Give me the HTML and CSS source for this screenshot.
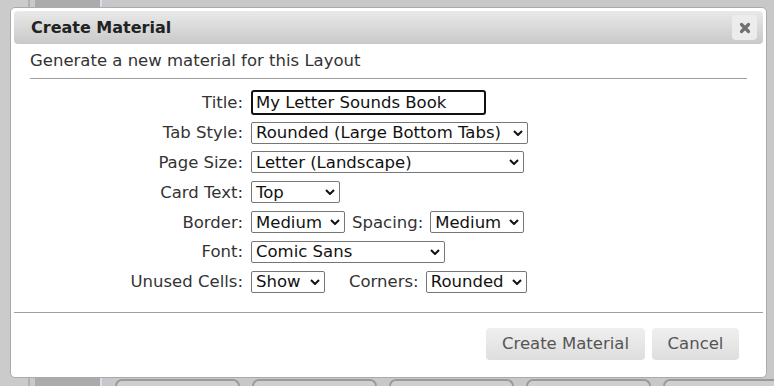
FILE: index.html
```html
<!DOCTYPE html>
<html lang="en">
<head>
  <meta charset="UTF-8" />
  <title>Create Material</title>
  <link rel="stylesheet" href="styles.css">
</head>
<body>
  <!-- page behind the modal -->
  <div class="page">
    <div class="side-strip"></div>
    <div class="side-dark"></div>
    <div class="side-gap"></div>
    <div class="page-main">
      <div class="tab-row">
        <div class="bg-tab"></div>
        <div class="bg-tab"></div>
        <div class="bg-tab"></div>
        <div class="bg-tab"></div>
        <div class="bg-tab"></div>
      </div>
    </div>
  </div>

  <!-- dialog -->
  <div class="dialog">
    <div class="dialog-title">
      <span>Create Material</span>
      <button class="close-btn" aria-label="close">
        <svg width="12" height="12" viewBox="0 0 12 12">
          <path d="M2.5 2.5 L9.5 9.5 M9.5 2.5 L2.5 9.5" stroke="#707070" stroke-width="3.2" stroke-linecap="round"/>
        </svg>
      </button>
    </div>

    <div class="dialog-body">
      <div class="intro">Generate a new material for this Layout</div>
      <div class="rule"></div>

      <div class="form">
        <div class="row">
          <label class="lbl">Title:</label>
          <div class="text-input">My Letter Sounds Book</div>
        </div>
        <div class="row">
          <label class="lbl">Tab Style:</label>
          <div class="sel w-tab"><span>Rounded (Large Bottom Tabs)</span><svg class="chev" viewBox="0 0 10 6"><path d="M1 1 L5 5 L9 1" /></svg></div>
        </div>
        <div class="row">
          <label class="lbl">Page Size:</label>
          <div class="sel w-page"><span>Letter (Landscape)</span><svg class="chev" viewBox="0 0 10 6"><path d="M1 1 L5 5 L9 1" /></svg></div>
        </div>
        <div class="row">
          <label class="lbl">Card Text:</label>
          <div class="sel w-card"><span>Top</span><svg class="chev" viewBox="0 0 10 6"><path d="M1 1 L5 5 L9 1" /></svg></div>
        </div>
        <div class="row">
          <label class="lbl">Border:</label>
          <div class="sel w-med"><span>Medium</span><svg class="chev" viewBox="0 0 10 6"><path d="M1 1 L5 5 L9 1" /></svg></div>
          <label class="lbl-inline">Spacing:</label>
          <div class="sel w-med"><span>Medium</span><svg class="chev" viewBox="0 0 10 6"><path d="M1 1 L5 5 L9 1" /></svg></div>
        </div>
        <div class="row">
          <label class="lbl">Font:</label>
          <div class="sel w-font"><span>Comic Sans</span><svg class="chev" viewBox="0 0 10 6"><path d="M1 1 L5 5 L9 1" /></svg></div>
        </div>
        <div class="row">
          <label class="lbl">Unused Cells:</label>
          <div class="sel w-show"><span>Show</span><svg class="chev" viewBox="0 0 10 6"><path d="M1 1 L5 5 L9 1" /></svg></div>
          <label class="lbl-inline corners">Corners:</label>
          <div class="sel w-round"><span>Rounded</span><svg class="chev" viewBox="0 0 10 6"><path d="M1 1 L5 5 L9 1" /></svg></div>
        </div>
      </div>
    </div>

    <div class="dialog-foot">
      <button class="btn btn-create">Create Material</button>
      <button class="btn btn-cancel">Cancel</button>
    </div>
  </div>
</body>
</html>
```

FILE: styles.css
```css
html, body {
  margin: 0;
  height: 100%;
}
body {
  background: #c9c9c9;
  font-family: 'DejaVu Sans', Verdana, sans-serif;
  color: #333;
  overflow: hidden;
  position: relative;
}

/* background page */
.page {
  display: flex;
  height: 386px;
}
.side-strip {
  flex: none;
  width: 28px;
  border-right: 2px solid #b0b0b0;
  background: #cbcbcb;
  margin-right: 5px;
}
.side-dark {
  flex: none;
  width: 65px;
  background: #ababab;
}
.side-gap {
  flex: none;
  width: 8px;
  background: #c6c6cc;
  border-left: 2px solid #dcdcdc;
}
.page-main {
  flex: 1;
  min-width: 0;
  display: flex;
  flex-direction: column;
  justify-content: flex-end;
  background: #c8c8c8;
  overflow: hidden;
}
.tab-row {
  display: flex;
  gap: 12px;
  padding-left: 5px;
  height: 7px;
}
.bg-tab {
  flex: none;
  width: 121px;
  border: 2px solid #9a9a9a;
  border-bottom: none;
  border-radius: 10px 10px 0 0;
  background: #cfcfcf;
}

/* dialog */
.dialog {
  position: absolute;
  left: 10px;
  top: 7px;
  width: 757px;
  height: 371px;
  background: #fff;
  border: 1px solid #aaa;
  border-radius: 5px;
  padding: 3px;
  box-sizing: border-box;
  display: flex;
  flex-direction: column;
}
.dialog-title {
  height: 33px;
  flex: none;
  border-radius: 4px;
  background: linear-gradient(#e9e9e9, #c9c9c9);
  display: flex;
  align-items: center;
  justify-content: space-between;
  padding: 0 6px 0 17px;
  font-weight: bold;
  font-size: 16px;
  color: #222;
}
.close-btn {
  width: 25px;
  height: 25px;
  border: none;
  border-radius: 4px;
  background: #ececec;
  display: flex;
  align-items: center;
  justify-content: center;
  padding: 0;
}

.dialog-body {
  padding: 0 16px;
  flex: 1;
}
.intro {
  font-size: 16.5px;
  margin-top: 6px;
  line-height: 22px;
}
.rule {
  height: 1px;
  background: #a0a0a0;
  margin-top: 6px;
}

.form {
  margin-top: 9px;
}
.row {
  display: flex;
  align-items: center;
  height: 29.8px;
  font-size: 16.5px;
}
.lbl {
  width: 213px;
  text-align: right;
  margin-right: 8px;
}
.lbl-inline {
  margin: 0 7px;
}
.lbl-inline.corners {
  margin-left: 24px;
}
.text-input {
  width: 228px;
  height: 21px;
  border: 2px solid #111;
  border-radius: 3px;
  padding-left: 3px;
  line-height: 21px;
  color: #111;
}
.sel {
  height: 20px;
  border: 1px solid #767676;
  border-radius: 2px;
  display: flex;
  align-items: center;
  justify-content: space-between;
  padding: 0 4px;
  color: #111;
}
.chev {
  width: 10px;
  height: 6px;
  flex: none;
  fill: none;
  stroke: #111;
  stroke-width: 2;
}
.w-tab { width: 267px; }
.w-page { width: 263px; }
.w-card { width: 79px; }
.w-med { width: 84px; }
.w-font { width: 184px; }
.w-show { width: 64px; }
.w-round { width: 91px; }

.dialog-foot {
  border-top: 1px solid #a0a0a0;
  height: 61px;
  flex: none;
  display: flex;
  align-items: center;
  justify-content: flex-end;
  gap: 7px;
  padding-right: 24px;
}
.btn {
  height: 32px;
  border: none;
  border-radius: 4px;
  background: linear-gradient(#efefef, #dedede);
  font-family: 'DejaVu Sans', Verdana, sans-serif;
  font-size: 16.5px;
  color: #555;
  padding: 0;
}
.btn-create { width: 159px; }
.btn-cancel { width: 87px; }
```
